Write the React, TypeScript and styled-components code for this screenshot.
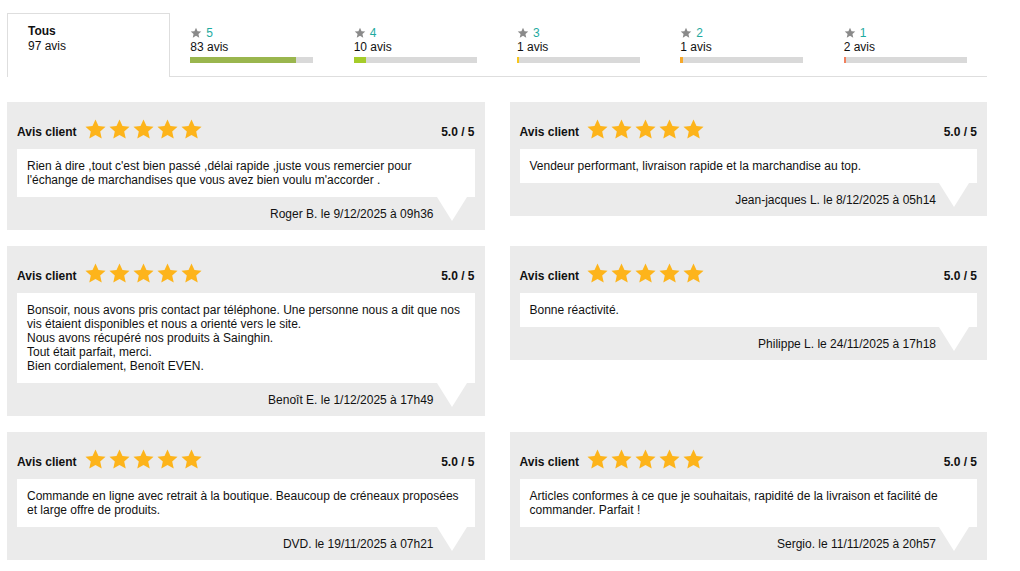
import styled, { createGlobalStyle } from "styled-components";

const GlobalStyle = createGlobalStyle`
    body {
        margin: 0;
        background: #fff;
        font-family: "Liberation Sans", Arial, sans-serif;
        font-size: 12px;
        color: #111;
    }
`;

const Page = styled.div`
    width: 980px;
    padding: 13px 7px 0 7px;
`;

const Tabs = styled.div`
    display: flex;
    border-bottom: 1px solid #dedede;
    height: 63px;
`;

const Tab = styled.div<{ $active?: boolean }>`
    flex: 0 0 calc(100% / 6);
    min-width: 0;
    box-sizing: border-box;
    padding: ${(p) => (p.$active ? "9px 0 0 20px" : "13px 0 0 20px")};
    background: #fff;
    border: ${(p) => (p.$active ? "1px solid #dedede" : "none")};
    border-bottom: none;
    height: ${(p) => (p.$active ? "64px" : "63px")};
    line-height: 14px;
    strong {
        display: block;
        font-weight: bold;
        line-height: 16px;
    }
`;

const StarLine = styled.div`
    display: flex;
    align-items: center;
    gap: 4px;
    color: #1eaaa0;
    svg {
        width: 12px;
        height: 12px;
    }
`;

const Bar = styled.div`
    margin-top: 3px;
    width: 123px;
    height: 6px;
    background: #d9d9d9;
`;

const Fill = styled.div<{ $color: string }>`
    height: 100%;
    background: ${(p) => p.$color};
`;

const Grid = styled.div`
    display: grid;
    grid-template-columns: 1fr 1fr;
    column-gap: 25px;
    row-gap: 16px;
    align-items: start;
    margin-top: 25px;
`;

const Card = styled.div`
    background: #ebebeb;
    padding: 17px 10px 0 10px;
`;

const Header = styled.div`
    display: flex;
    align-items: flex-end;
    height: 20px;
    line-height: 14px;
    font-weight: bold;
`;

const Stars = styled.div`
    display: flex;
    gap: 1px;
    margin-left: 7px;
    align-self: center;
    svg {
        width: 23px;
        height: 23px;
    }
`;

const Score = styled.span`
    margin-left: auto;
`;

const Bubble = styled.div`
    position: relative;
    margin-top: 10px;
    background: #fff;
    padding: 10px 10px;
    line-height: 14px;
    &::after {
        content: "";
        position: absolute;
        top: 100%;
        right: 8px;
        border-left: 15px solid transparent;
        border-right: 15px solid transparent;
        border-top: 24px solid #fff;
    }
`;

const Author = styled.div`
    text-align: right;
    padding: 10px 41px 9px 0;
    line-height: 14px;
`;

const Star = ({ color }: { color: string }) => (
    <svg viewBox="0 0 24 24">
        <polygon
            fill={color}
            points="12,1.5 15.1,8.3 22.5,9.1 16.9,14.1 18.5,21.5 12,17.7 5.5,21.5 7.1,14.1 1.5,9.1 8.9,8.3"
        />
    </svg>
);

const tabs = [
    { n: 5, count: 83, color: "#9ab64e" },
    { n: 4, count: 10, color: "#a5cc2a" },
    { n: 3, count: 1, color: "#f7c61b" },
    { n: 2, count: 1, color: "#f6a82a" },
    { n: 1, count: 2, color: "#f1805d" },
];

const reviews = [
    {
        text: ["Rien à dire ,tout c'est bien passé ,délai rapide ,juste vous remercier pour l'échange de marchandises que vous avez bien voulu m'accorder ."],
        author: "Roger B. le 9/12/2025 à 09h36",
    },
    {
        text: ["Vendeur performant, livraison rapide et la marchandise au top."],
        author: "Jean-jacques L. le 8/12/2025 à 05h14",
    },
    {
        text: [
            "Bonsoir, nous avons pris contact par téléphone. Une personne nous a dit que nos vis étaient disponibles et nous a orienté vers le site.",
            "Nous avons récupéré nos produits à Sainghin.",
            "Tout était parfait, merci.",
            "Bien cordialement, Benoît EVEN.",
        ],
        author: "Benoît E. le 1/12/2025 à 17h49",
    },
    {
        text: ["Bonne réactivité."],
        author: "Philippe L. le 24/11/2025 à 17h18",
    },
    {
        text: ["Commande en ligne avec retrait à la boutique. Beaucoup de créneaux proposées et large offre de produits."],
        author: "DVD. le 19/11/2025 à 07h21",
    },
    {
        text: ["Articles conformes à ce que je souhaitais, rapidité de la livraison et facilité de commander. Parfait !"],
        author: "Sergio. le 11/11/2025 à 20h57",
    },
];

function App() {
    const total = 97;
    return (
        <>
            <GlobalStyle />
            <Page>
                <Tabs>
                    <Tab $active>
                        <strong>Tous</strong>
                        {total} avis
                    </Tab>
                    {tabs.map((t) => (
                        <Tab key={t.n}>
                            <StarLine>
                                <Star color="#8a8a8a" />
                                {t.n}
                            </StarLine>
                            {t.count} avis
                            <Bar>
                                <Fill $color={t.color} style={{ width: `${Math.max((t.count / total) * 100, 2)}%` }} />
                            </Bar>
                        </Tab>
                    ))}
                </Tabs>
                <Grid>
                    {reviews.map((r, i) => (
                        <Card key={i}>
                            <Header>
                                Avis client
                                <Stars>
                                    {[0, 1, 2, 3, 4].map((s) => (
                                        <Star key={s} color="#fdb41b" />
                                    ))}
                                </Stars>
                                <Score>5.0 / 5</Score>
                            </Header>
                            <Bubble>
                                {r.text.map((line, j) => (
                                    <div key={j}>{line}</div>
                                ))}
                            </Bubble>
                            <Author>{r.author}</Author>
                        </Card>
                    ))}
                </Grid>
            </Page>
        </>
    );
}

export default App;
